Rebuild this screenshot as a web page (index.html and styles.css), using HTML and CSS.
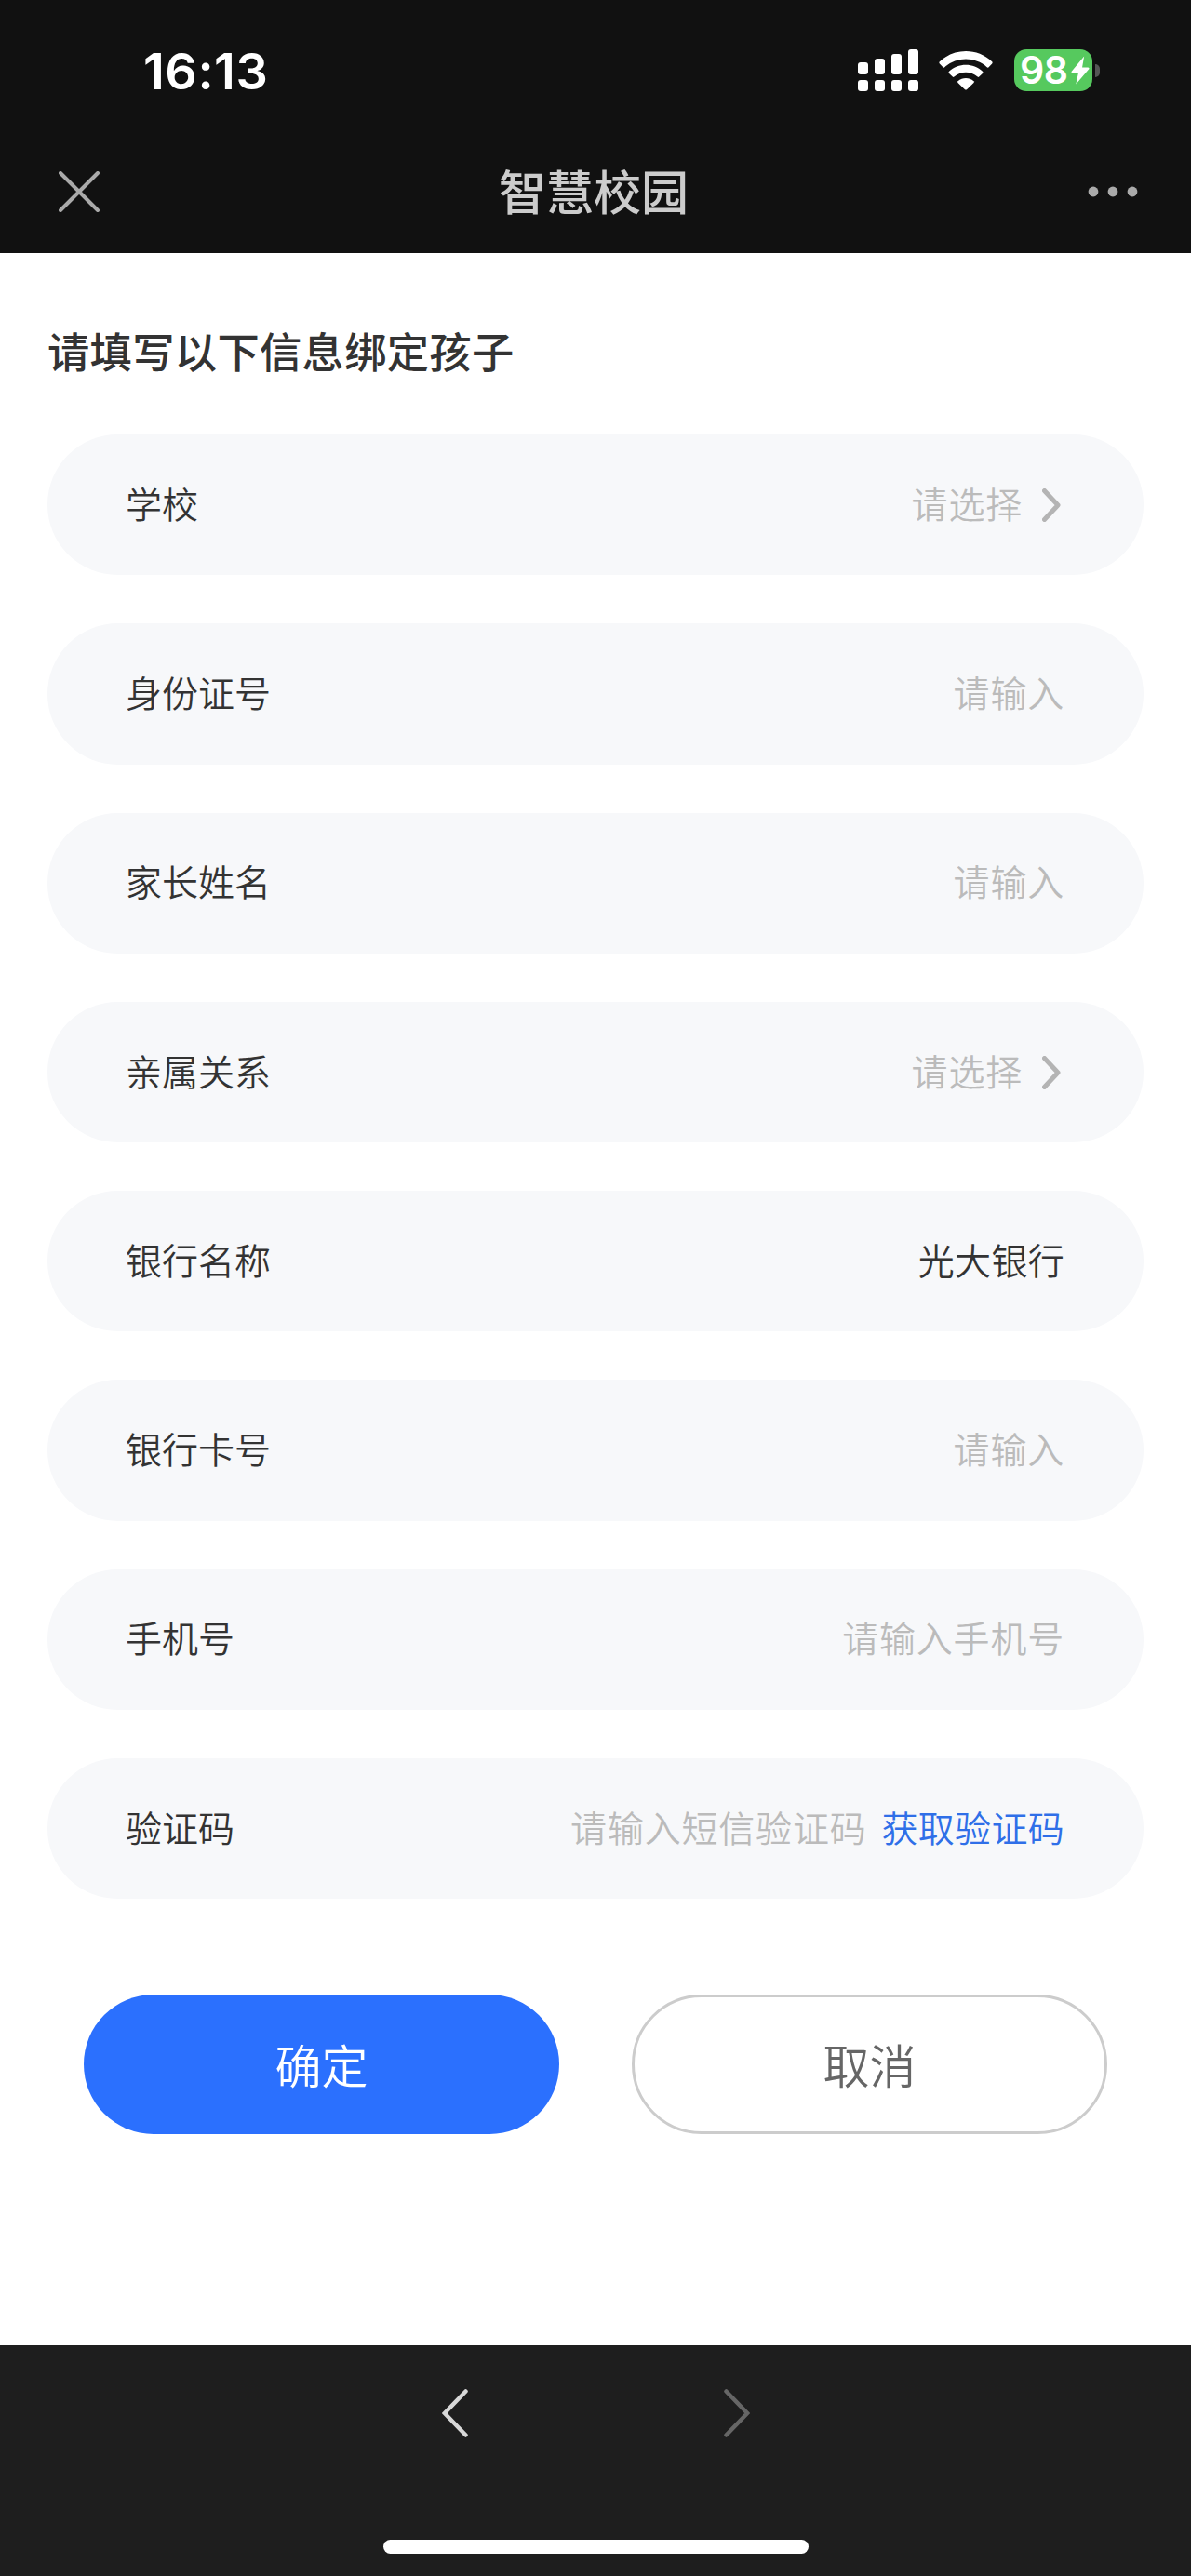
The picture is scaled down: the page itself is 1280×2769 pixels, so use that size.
FILE: index.html
```
<!DOCTYPE html>
<html lang="zh-CN">
<head>
    <meta charset="UTF-8">
    <meta name="viewport" content="width=device-width, initial-scale=1.0">
    <title>智慧校园</title>
    <link rel="stylesheet" href="styles.css">
</head>
<body>
    <!-- Status bar -->
    <div class="status-bar">
        <span class="time">16:13</span>
        <div class="status-icons">
            <svg class="signal" viewBox="0 0 65 45" fill="#fff">
                <rect x="0" y="14" width="11" height="13" rx="3"/>
                <rect x="18" y="10" width="11" height="17" rx="3"/>
                <rect x="36" y="5" width="11" height="22" rx="3"/>
                <rect x="54" y="0" width="11" height="27" rx="3"/>
                <rect x="0" y="33" width="11" height="12" rx="3"/>
                <rect x="18" y="33" width="11" height="12" rx="3"/>
                <rect x="36" y="33" width="11" height="12" rx="3"/>
                <rect x="54" y="33" width="11" height="12" rx="3"/>
            </svg>
            <svg class="wifi" viewBox="0 0 58 42" fill="#fff">
                <path d="M0.6 11.5Q0 12.5 0.8 13.4L4.7 17.4Q5.5 18 6.3 17.2C19 5.7 39 5.7 51.7 17.2Q52.5 18 53.3 17.4L57.2 13.4Q58 12.5 57.4 11.5C41.5 -3.8 16.5 -3.8 0.6 11.5Z"/>
                <path d="M10.8 22Q10 23 10.8 23.8L14.8 27.6Q15.6 28.3 16.4 27.5C23.5 21.2 34.5 21.2 41.6 27.5Q42.4 28.3 43.2 27.6L47.2 23.8Q48 23 47.2 22C37 12.3 21 12.3 10.8 22Z"/>
                <path d="M20.5 32.2Q19.7 33.2 20.5 34L28 41.2Q29 42 30 41.2L37.5 34Q38.3 33.2 37.5 32.2C32.5 27.9 25.5 27.9 20.5 32.2Z"/>
            </svg>
            <div class="battery">
                <span class="battery-level">98</span>
                <svg class="bolt" viewBox="0 0 19 30" fill="#fff">
                    <path d="M13.5 0.5L0.3 16.5Q0 18 1.5 18H7.5L5 29.5L18.700 13.500Q19 12 17.500 12H11.500Z"/>
                </svg>
            </div>
            <div class="battery-tip"></div>
        </div>
    </div>

    <!-- Title bar -->
    <header class="nav-bar">
        <svg class="close" viewBox="0 0 44 44" fill="none" stroke="#aaa" stroke-width="4" stroke-linecap="round">
            <path d="M2 2L42 42M42 2L2 42"/>
        </svg>
        <h1>智慧校园</h1>
        <svg class="more" viewBox="0 0 54 12" fill="#aaa">
            <circle cx="6" cy="6" r="5.4"/>
            <circle cx="27" cy="6" r="5.4"/>
            <circle cx="48" cy="6" r="5.4"/>
        </svg>
    </header>

    <!-- Binding form -->
    <main class="content">
        <h2>请填写以下信息绑定孩子</h2>
        <div class="form">
            <div class="row">
                <span class="label">学校</span>
                <span class="placeholder">请选择</span>
                <svg class="arrow" viewBox="0 0 20 36"><path d="M2.5 2.5L17 18L2.5 33.5"/></svg>
            </div>
            <div class="row">
                <span class="label">身份证号</span>
                <span class="placeholder">请输入</span>
            </div>
            <div class="row">
                <span class="label">家长姓名</span>
                <span class="placeholder">请输入</span>
            </div>
            <div class="row">
                <span class="label">亲属关系</span>
                <span class="placeholder">请选择</span>
                <svg class="arrow" viewBox="0 0 20 36"><path d="M2.5 2.5L17 18L2.5 33.5"/></svg>
            </div>
            <div class="row">
                <span class="label">银行名称</span>
                <span class="value">光大银行</span>
            </div>
            <div class="row">
                <span class="label">银行卡号</span>
                <span class="placeholder">请输入</span>
            </div>
            <div class="row">
                <span class="label">手机号</span>
                <span class="placeholder">请输入手机号</span>
            </div>
            <div class="row">
                <span class="label">验证码</span>
                <span class="placeholder">请输入短信验证码</span>
                <a class="get-code">获取验证码</a>
            </div>
        </div>
        <div class="buttons">
            <button class="btn btn-ok">确定</button>
            <button class="btn btn-cancel">取消</button>
        </div>
    </main>

    <!-- Browser toolbar -->
    <footer class="toolbar">
        <div class="history">
            <svg viewBox="0 0 28 52" stroke="#d8d8d8"><path d="M25.5 2.5L2.8 26L25.5 49.5"/></svg>
            <svg viewBox="0 0 28 52" stroke="#666"><path d="M2.5 2.5L25.2 26L2.5 49.5"/></svg>
        </div>
        <div class="home-bar"></div>
    </footer>
</body>
</html>
```

FILE: styles.css
```
* { box-sizing: border-box; }
body {
    margin: 0;
    width: 1280px;
    height: 2769px;
    display: flex;
    flex-direction: column;
    background: #fff;
    color: #333;
    font-family: "Noto Sans CJK SC", sans-serif;
}
svg { display: block; flex: none; }

/* Status bar */
.status-bar {
    height: 140px;
    padding: 53px 98px 0 154px;
    display: flex;
    justify-content: space-between;
    align-items: flex-start;
    background: #111;
    color: #fff;
    font-family: Inter, sans-serif;
}
.time { font-size: 54px; line-height: 48px; font-weight: 600; letter-spacing: 0.5px; }
.status-icons { display: flex; align-items: center; height: 45px; }
.signal { width: 65px; height: 45px; margin-right: 22px; }
.wifi { width: 58px; height: 42px; margin-right: 23px; }
.battery {
    width: 84px;
    height: 45px;
    padding: 0 3px 0 6px;
    display: flex;
    align-items: center;
    justify-content: space-between;
    border-radius: 13px;
    background: #56c95e;
}
.battery-level { font-size: 41px; line-height: 45px; font-weight: 600; letter-spacing: -0.5px; }
.bolt { width: 20px; height: 31px; }
.battery-tip { width: 5px; height: 14px; margin-left: 3px; border-radius: 0 5px 5px 0; background: #555; }

/* Title bar */
.nav-bar {
    height: 132px;
    padding: 0 57px 0 63px;
    display: flex;
    align-items: center;
    justify-content: space-between;
    background: #111;
}
.close { width: 44px; height: 44px; }
.more { width: 54px; height: 12px; }
h1 { margin: 0; padding-bottom: 4px; font-size: 51px; line-height: 60px; font-weight: 500; color: #ccc; }

/* Form */
.content { flex: 1; padding: 74px 51px 0; }
h2 { margin: 0; font-size: 45.3px; line-height: 60px; font-weight: 500; letter-spacing: 0.3px; }
.form { margin-top: 61px; display: flex; flex-direction: column; gap: 52px; }
.row {
    height: 151.3px;
    padding: 0 85px 6px 84px;
    display: flex;
    align-items: center;
    border-radius: 76px;
    background: #f7f8fa;
    font-size: 39px;
    line-height: 56px;
    font-weight: 350;
}
.label { flex: 1; }
.placeholder { color: #bbb; letter-spacing: 0.8px; }
.value { letter-spacing: 0.3px; }
.arrow {
    width: 20px;
    height: 36px;
    margin: 6px 4px 0 21px;
    fill: none;
    stroke: #b4b4b4;
    stroke-width: 5;
    stroke-linecap: round;
    stroke-linejoin: round;
}
.get-code { margin-left: 16px; color: #2f6fe8; letter-spacing: 0.3px; }

.buttons { margin-top: 103px; padding: 0 39px; display: flex; justify-content: space-between; }
.btn {
    width: 511px;
    height: 150px;
    padding: 0 0 2px;
    border: 0;
    border-radius: 75px;
    font-family: inherit;
    font-size: 50px;
    line-height: 60px;
    font-weight: 350;
}
.btn-ok { background: #2b70fe; color: #fff; }
.btn-cancel { background: #fff; border: 3px solid #ccc; color: #666; }

/* Toolbar */
.toolbar {
    height: 248px;
    padding: 47px 0 24px;
    display: flex;
    flex-direction: column;
    justify-content: space-between;
    align-items: center;
    background: #1e1e1e;
}
.history { display: flex; gap: 275px; }
.history svg { width: 28px; height: 52px; fill: none; stroke-width: 4.5; stroke-linecap: round; stroke-linejoin: miter; }
.home-bar { width: 457px; height: 15px; border-radius: 8px; background: #fff; }
```
